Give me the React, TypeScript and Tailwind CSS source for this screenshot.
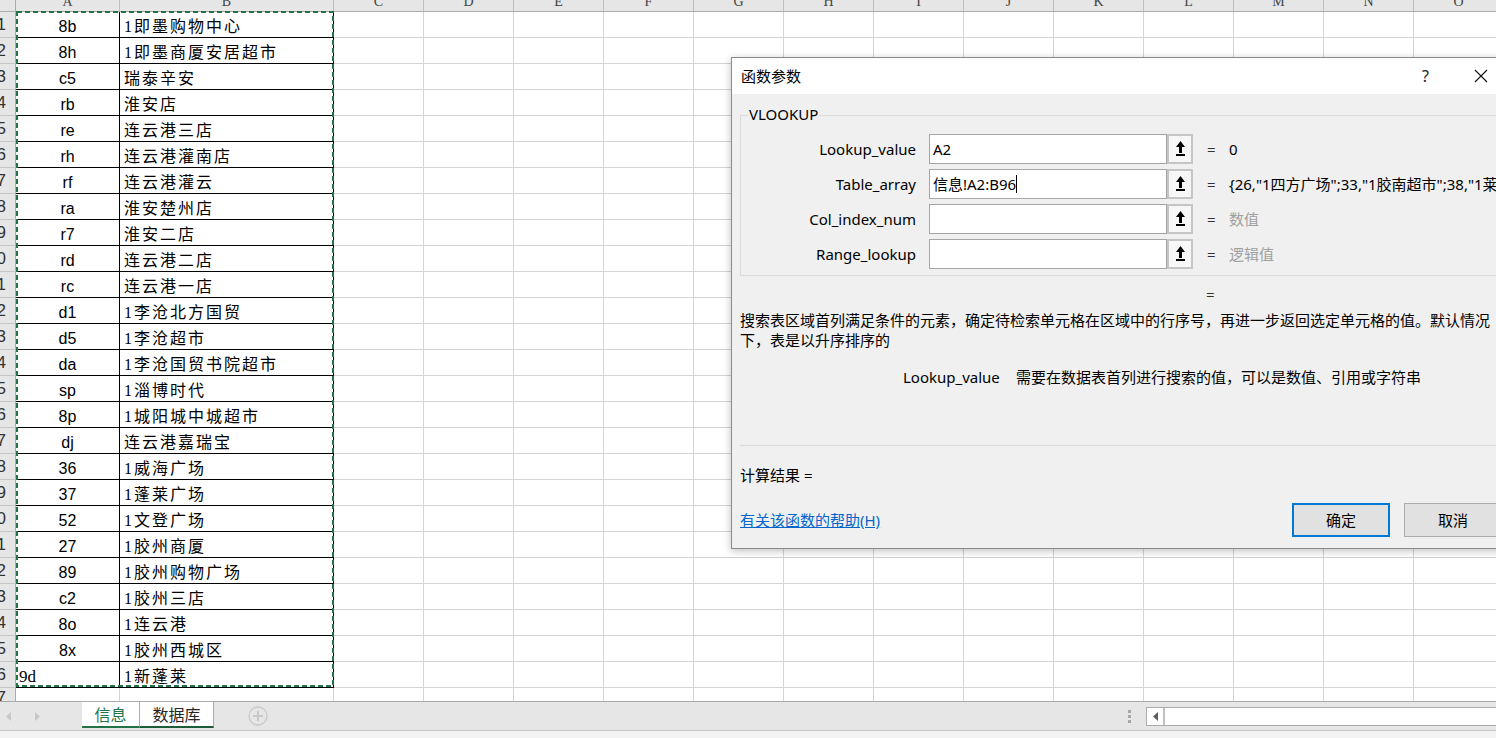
import React from "react";

const rows: [string, string][] = [
  ["8b", "1即墨购物中心"],
  ["8h", "1即墨商厦安居超市"],
  ["c5", "瑞泰辛安"],
  ["rb", "淮安店"],
  ["re", "连云港三店"],
  ["rh", "连云港灌南店"],
  ["rf", "连云港灌云"],
  ["ra", "淮安楚州店"],
  ["r7", "淮安二店"],
  ["rd", "连云港二店"],
  ["rc", "连云港一店"],
  ["d1", "1李沧北方国贸"],
  ["d5", "1李沧超市"],
  ["da", "1李沧国贸书院超市"],
  ["sp", "1淄博时代"],
  ["8p", "1城阳城中城超市"],
  ["dj", "连云港嘉瑞宝"],
  ["36", "1威海广场"],
  ["37", "1蓬莱广场"],
  ["52", "1文登广场"],
  ["27", "1胶州商厦"],
  ["89", "1胶州购物广场"],
  ["c2", "1胶州三店"],
  ["8o", "1连云港"],
  ["8x", "1胶州西城区"],
  ["9d", "1新蓬莱"],
];

const cols = ["C", "D", "E", "F", "G", "H", "I", "J", "K", "L", "M", "N", "O"];

function UpArrow() {
  return (
    <svg width="9" height="16" viewBox="0 0 9 16">
      <path d="M4.5 0 L9 6 L6 6 L6 12 L3 12 L3 6 L0 6 Z" fill="#000" />
      <rect x="0" y="13" width="9" height="2" fill="#000" />
    </svg>
  );
}

function ParamRow({
  label,
  value,
  result,
  gray,
  cursor,
}: {
  label: string;
  value: string;
  result: string;
  gray?: boolean;
  cursor?: boolean;
}) {
  return (
    <div className="flex items-center h-[30px]">
      <div className="w-[175px] shrink-0 text-right whitespace-nowrap">{label}</div>
      <div className="ml-[13px] w-[238px] shrink-0 h-full border border-[#a5a5a5] bg-white flex items-center pl-[3px] whitespace-nowrap">
        <span>{value}</span>
        {cursor && <span className="inline-block w-px h-[18px] bg-black" />}
      </div>
      <div className="w-[26px] shrink-0 h-full border-2 border-[#c5c5c5] bg-[#f7f7f7] flex items-center justify-center">
        <UpArrow />
      </div>
      <div className="ml-[14px] w-[8px] shrink-0 text-[#333]">=</div>
      <div className={`ml-[14px] shrink-0 whitespace-nowrap ${gray ? "text-[#a0a0a0]" : "text-black"}`}>
        {result}
      </div>
    </div>
  );
}

export default function App() {
  return (
    <div className="relative w-[1496px] h-[738px] overflow-hidden bg-white flex flex-col">
      {/* column header */}
      <div className="flex h-[12px] shrink-0 bg-[#e6e6e6] border-b border-[#ababab] font-['Liberation_Serif',serif] text-[14px] text-[#444] overflow-hidden">
        <div className="w-[16px] shrink-0 border-r border-[#ababab]" />
        <div className="w-[104px] shrink-0 flex items-end justify-center overflow-hidden border-r border-[#bdbdbd] leading-[14px] pb-[2px]">
          A
        </div>
        <div className="w-[214px] shrink-0 flex items-end justify-center overflow-hidden border-r border-[#bdbdbd] leading-[14px] pb-[2px]">
          B
        </div>
        {cols.map((c) => (
          <div
            key={c}
            className="w-[90px] shrink-0 flex items-end justify-center overflow-hidden border-r border-[#bdbdbd] leading-[14px] pb-[2px]"
          >
            {c}
          </div>
        ))}
      </div>

      {/* rows */}
      {rows.map(([a, b], i) => (
        <div key={i} className="flex h-[26px] shrink-0">
          <div className="w-[16px] shrink-0 bg-[#e6e6e6] border-r border-b border-r-[#ababab] border-b-[#c6c6c6] flex items-center justify-end pr-[9px] overflow-hidden font-['Liberation_Sans',sans-serif] text-[17px] text-[#333]">
            {i + 1}
          </div>
          {i === 25 ? (
            <div className="w-[104px] shrink-0 border-r border-b border-black flex items-end justify-start pl-[3px] leading-[20px] text-[17px] font-['Liberation_Serif',serif] text-black">
              {a}
            </div>
          ) : (
            <div className="w-[104px] shrink-0 border-r border-b border-black flex items-end justify-center leading-[20px] text-[16px] font-['Liberation_Sans',sans-serif] text-black">
              {a}
            </div>
          )}
          <div className="w-[214px] shrink-0 border-r border-b border-black flex items-end pl-[4px] leading-[20px] text-[16px] tracking-[2px] font-['Liberation_Serif','Noto_Sans_CJK_SC',serif] text-black whitespace-nowrap">
            {b}
          </div>
          {cols.map((c) => (
            <div key={c} className="w-[90px] shrink-0 border-r border-b border-[#d4d4d4]" />
          ))}
        </div>
      ))}

      {/* partial row 27 */}
      <div className="flex flex-1 min-h-0 overflow-hidden">
        <div className="w-[16px] shrink-0 bg-[#e6e6e6] border-r border-[#ababab] flex items-start justify-end pr-[9px] overflow-hidden font-['Liberation_Sans',sans-serif] text-[17px] leading-[20px] text-[#333]">
          27
        </div>
        <div className="w-[104px] shrink-0 border-r border-[#d4d4d4]" />
        <div className="w-[214px] shrink-0 border-r border-[#d4d4d4]" />
        {cols.map((c) => (
          <div key={c} className="w-[90px] shrink-0 border-r border-[#d4d4d4]" />
        ))}
      </div>

      {/* sheet tab bar */}
      <div className="h-[30px] shrink-0 border-t border-b border-t-[#ababab] border-b-[#c6c6c6] bg-[#e6e6e6] flex items-stretch overflow-hidden font-['Noto_Sans_CJK_SC',sans-serif]">
        <div className="w-[82px] shrink-0 flex items-center">
          <svg className="ml-[6px]" width="5" height="9" viewBox="0 0 5 9">
            <path d="M5 0 L0 4.5 L5 9 Z" fill="#c8c8c8" />
          </svg>
          <svg className="ml-[24px]" width="5" height="9" viewBox="0 0 5 9">
            <path d="M0 0 L5 4.5 L0 9 Z" fill="#c8c8c8" />
          </svg>
        </div>
        <div className="flex items-start shrink-0">
          <div className="w-[58px] h-[26px] bg-white border-r border-r-[#ababab] border-b-2 border-b-[#217346] flex items-center justify-center text-[16px] text-[#217346]">
            信息
          </div>
          <div className="w-[74px] h-[26px] bg-white border-r border-r-[#ababab] border-b-2 border-b-[#1d5c38] flex items-center justify-center text-[16px] text-[#262626]">
            数据库
          </div>
        </div>
        <div className="ml-[34px] shrink-0 flex items-center">
          <svg width="20" height="20" viewBox="0 0 20 20">
            <circle cx="10" cy="10" r="9" fill="none" stroke="#c8c8c8" strokeWidth="1.3" />
            <path d="M10 5 V15 M5 10 H15" stroke="#c8c8c8" strokeWidth="2" />
          </svg>
        </div>
        <div className="ml-[860px] shrink-0 flex items-center">
          <div className="flex flex-col gap-[2px]">
            <div className="w-[3px] h-[3px] bg-[#a6a6a6]" />
            <div className="w-[3px] h-[3px] bg-[#a6a6a6]" />
            <div className="w-[3px] h-[3px] bg-[#a6a6a6]" />
          </div>
          <div className="ml-[15px] w-[370px] h-[19px] border border-[#ababab] bg-white flex shrink-0">
            <div className="w-[18px] h-full border-r-2 border-[#c0c0c0] flex items-center justify-center">
              <svg width="5" height="9" viewBox="0 0 5 9">
                <path d="M5 0 L0 4.5 L5 9 Z" fill="#5f5f5f" />
              </svg>
            </div>
          </div>
        </div>
      </div>

      {/* status bar */}
      <div className="h-[7px] shrink-0 bg-[#f3f3f3]" />

      {/* copy marquee */}
      <svg className="absolute left-[16px] top-[11px] pointer-events-none" width="318" height="677">
        <rect
          x="1"
          y="1"
          width="316"
          height="674"
          fill="none"
          stroke="#217346"
          strokeWidth="2"
          strokeDasharray="5 3"
        />
      </svg>

      {/* dialog */}
      <div className="absolute left-[731px] top-[57px] w-[780px] border border-[#8a8a8a] bg-[#f0f0f0] shadow-[0_2px_8px_rgba(0,0,0,0.25)] font-['Noto_Sans','Noto_Sans_CJK_SC',sans-serif] text-[15px] text-black">
        <div className="h-[36px] bg-white flex items-center">
          <span className="pl-[9px] w-[690px] shrink-0">函数参数</span>
          <span className="w-[8px] shrink-0 text-[16px] text-[#222]">?</span>
          <svg className="ml-[44px] shrink-0" width="14" height="14" viewBox="0 0 14 14">
            <path d="M1 1 L13 13 M13 1 L1 13" stroke="#111" strokeWidth="1.1" />
          </svg>
        </div>
        <div className="pl-[8px] pr-[8px] pb-[11px]">
          <div className="relative mt-[21px] border border-[#dcdcdc] pt-[18px] pb-[6px]">
            <span className="absolute left-[7px] top-[-12px] bg-[#f0f0f0] px-[1px] leading-[20px]">
              VLOOKUP
            </span>
            <div className="flex flex-col gap-[5px] overflow-hidden">
              <ParamRow label="Lookup_value" value="A2" result="0" />
              <ParamRow
                label="Table_array"
                value="信息!A2:B96"
                cursor
                result={'{26,"1四方广场";33,"1胶南超市";38,"1莱西店";39,"1平度'}
              />
              <ParamRow label="Col_index_num" value="" result="数值" gray />
              <ParamRow label="Range_lookup" value="" result="逻辑值" gray />
            </div>
          </div>
          <div className="mt-[8px] h-[20px] leading-[20px] pl-[466px] text-[#333]">=</div>
          <div className="mt-[6px] leading-[20px] whitespace-nowrap">
            搜索表区域首列满足条件的元素，确定待检索单元格在区域中的行序号，再进一步返回选定单元格的值。默认情况
          </div>
          <div className="leading-[20px] whitespace-nowrap">下，表是以升序排序的</div>
          <div className="mt-[17px] leading-[20px] pl-[163px] flex whitespace-nowrap">
            <span className="w-[113px] shrink-0">Lookup_value</span>
            <span>需要在数据表首列进行搜索的值，可以是数值、引用或字符串</span>
          </div>
          <div className="mt-[58px] h-px bg-[#dadada]" />
          <div className="mt-[19px] leading-[20px]">计算结果 =</div>
          <div className="mt-[18px] flex items-center h-[34px]">
            <div className="w-[552px] shrink-0">
              <span className="text-[#0066cc] underline">有关该函数的帮助(H)</span>
            </div>
            <div className="w-[98px] h-[34px] shrink-0 border-2 border-[#0078d7] bg-[#e1e1e1] flex items-center justify-center">
              确定
            </div>
            <div className="ml-[14px] w-[98px] h-[34px] shrink-0 border border-[#adadad] bg-[#e1e1e1] flex items-center justify-center">
              取消
            </div>
          </div>
        </div>
      </div>
    </div>
  );
}
